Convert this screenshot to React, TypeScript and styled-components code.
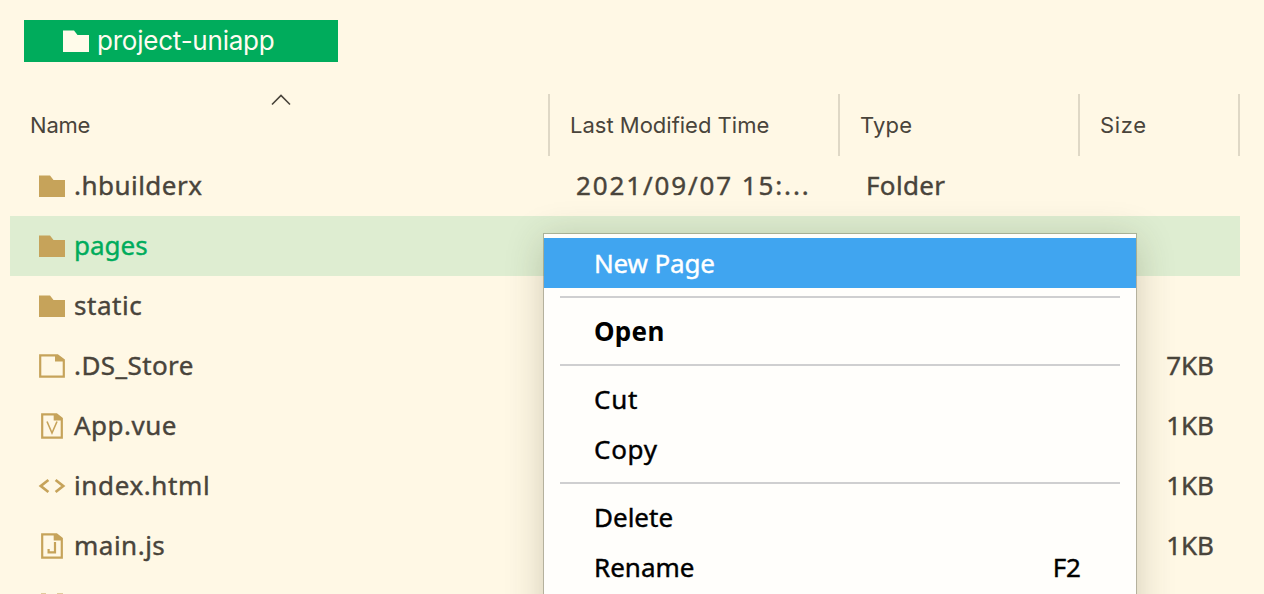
import React from "react";
import styled, { createGlobalStyle } from "styled-components";

const GlobalStyle = createGlobalStyle`
  * { box-sizing: border-box; }
  html, body { margin: 0; height: 100%; overflow: hidden; }
`;

const Explorer = styled.main`
  position: relative;
  display: flow-root;
  height: 594px;
  overflow: hidden;
  background: #fff8e5;
  color: #49443b;
  font-family: "Noto Sans", "Open Sans", sans-serif;
  font-size: 26px;
`;

const ProjectTab = styled.div`
  display: flex;
  align-items: center;
  gap: 7px;
  width: 314px;
  height: 42px;
  margin: 20px 0 32px 24px;
  padding-left: 38px;
  background: #00ac5c;
  color: #fffbf0;
  font-family: Inter, sans-serif;
  line-height: 42px;
  svg { display: block; }
`;

const Label = styled.span<{ $track?: number; $heavy?: boolean }>`
  letter-spacing: ${(p) => p.$track ?? 0}px;
  -webkit-text-stroke: ${(p) => (p.$heavy ? "0.4px currentColor" : "0")};
  white-space: pre;
`;

const Grid = styled.div`
  display: grid;
  grid-template-columns: 540px 290px 240px 160px;
  width: 1230px;
  margin-left: 10px;
`;

const HeaderCell = styled.div`
  display: flex;
  flex-direction: column;
  height: 62px;
  padding-left: 20px;
  border-right: 2px solid #dfd8c6;
  font-family: Inter, sans-serif;
  font-size: 22px;
  line-height: 30px;
`;

const SortSlot = styled.div`
  display: flex;
  justify-content: center;
  height: 16px;
  padding-right: 16px;
`;

const Row = styled.div<{ $selected?: boolean }>`
  display: grid;
  grid-template-columns: subgrid;
  grid-column: 1 / -1;
  height: 60px;
  line-height: 58px;
  background: ${(p) => (p.$selected ? "#deedd1" : "transparent")};
  color: ${(p) => (p.$selected ? "#00ac5c" : "inherit")};
`;

const NameCell = styled.div`
  display: flex;
  gap: 8px;
  padding-left: 28px;
  svg { display: block; flex: none; margin-top: 16px; }
`;

const TextCell = styled.div`
  padding-left: 26px;
  white-space: nowrap;
`;

const SizeCell = styled.div`
  padding-right: 26px;
  text-align: right;
`;

const Menu = styled.div`
  position: absolute;
  left: 544px;
  top: 234px;
  width: 592px;
  height: 480px;
  padding-top: 4px;
  background: #fffefb;
  color: #000;
  box-shadow: 0 0 0 1px rgba(90, 90, 70, 0.35), 0 6px 36px rgba(60, 60, 20, 0.24);
`;

const MenuItem = styled.div<{ $active?: boolean; $bold?: boolean }>`
  display: flex;
  justify-content: space-between;
  height: 50px;
  padding: 0 55px 0 50px;
  line-height: 51px;
  font-weight: ${(p) => (p.$bold ? 700 : 400)};
  background: ${(p) => (p.$active ? "#40a5f0" : "transparent")};
  color: ${(p) => (p.$active ? "#fff" : "inherit")};
`;

const Separator = styled.div`
  height: 2px;
  margin: 8px 16px;
  background: #cfcfd0;
`;

type IconKind = "folder" | "file" | "vue" | "html" | "js" | "json";

const gold = "#c6a35a";

function FolderShape({ color = gold }: { color?: string }) {
  return (
    <svg width="28" height="28" viewBox="0 0 28 28">
      <path d="M1 3.5H12L15.5 8H27V25H1Z" fill={color} />
    </svg>
  );
}

function FileIcon({ kind }: { kind: IconKind }) {
  if (kind === "folder") return <FolderShape />;
  return (
    <svg width="28" height="28" viewBox="0 0 28 28" fill="none" stroke={gold} strokeWidth="2.2">
      {kind === "file" && (
        <>
          <path d="M2.2 3.4H19.5L25.8 8V24.6H2.2Z" />
          <path d="M17 3H20L26 8V9.5H17Z" fill={gold} stroke="none" />
        </>
      )}
      {(kind === "vue" || kind === "js") && (
        <>
          <path d="M4.2 2.4H18.5L23.8 6.6V25.7H4.2Z" />
          <path d="M15.7 2H19L24 6.5V8.6H15.7Z" fill={gold} stroke="none" />
        </>
      )}
      {kind === "vue" && <path d="M9 9.5L14 21L19 9.5" strokeWidth="1.6" />}
      {kind === "js" && <path d="M17 10V20.3H10.6V17" />}
      {kind === "html" && <path d="M10.4 8L2.8 14L10.4 20M17.6 8L25.2 14L17.6 20" strokeWidth="2.7" />}
      {kind === "json" && <path d="M8 2.4H3M19 2.4H25" strokeOpacity="0.7" />}
    </svg>
  );
}

interface Entry {
  name: string;
  kind: IconKind;
  track?: number;
  time?: string;
  type?: string;
  size?: string;
  selected?: boolean;
}

const entries: Entry[] = [
  { name: ".hbuilderx", kind: "folder", track: 0.47, time: "2021/09/07 15:...", type: "Folder" },
  { name: "pages", kind: "folder", selected: true },
  { name: "static", kind: "folder", track: 0.55 },
  { name: ".DS_Store", kind: "file", track: 0.42, size: "7KB" },
  { name: "App.vue", kind: "vue", track: 0.5, size: "1KB" },
  { name: "index.html", kind: "html", track: 0.62, size: "1KB" },
  { name: "main.js", kind: "js", track: 0.5, size: "1KB" },
  { name: "", kind: "json" },
];

export default function App() {
  return (
    <>
      <GlobalStyle />
      <Explorer>
        <ProjectTab>
          <FolderShape color="#fffbea" />
          <Label $track={-0.22}>project-uniapp</Label>
        </ProjectTab>
        <Grid>
          <HeaderCell>
            <SortSlot>
              <svg width="20" height="14" viewBox="0 0 20 14" fill="none" stroke="#49443b" strokeWidth="1.6">
                <path d="M1 10.5L10 1.5L19 10.5" />
              </svg>
            </SortSlot>
            <Label $track={-0.2}>Name</Label>
          </HeaderCell>
          <HeaderCell><SortSlot /><Label>Last Modified Time</Label></HeaderCell>
          <HeaderCell><SortSlot /><Label $track={0.2}>Type</Label></HeaderCell>
          <HeaderCell><SortSlot /><Label $track={0.7}>Size</Label></HeaderCell>
          {entries.map((e, i) => (
            <Row key={i} $selected={e.selected}>
              <NameCell>
                <FileIcon kind={e.kind} />
                <Label $heavy $track={e.track}>{e.name}</Label>
              </NameCell>
              <TextCell>{e.time && <Label $heavy $track={1.88}>{e.time}</Label>}</TextCell>
              <TextCell>{e.type && <Label $heavy $track={0.35}>{e.type}</Label>}</TextCell>
              <SizeCell>{e.size && <Label $heavy>{e.size}</Label>}</SizeCell>
            </Row>
          ))}
        </Grid>
        <Menu>
          <MenuItem $active><Label $heavy $track={-0.15}>New Page</Label></MenuItem>
          <Separator />
          <MenuItem $bold><Label $track={0.3}>Open</Label></MenuItem>
          <Separator />
          <MenuItem><Label $heavy $track={0.7}>Cut</Label></MenuItem>
          <MenuItem><Label $heavy $track={0.7}>Copy</Label></MenuItem>
          <Separator />
          <MenuItem><Label $heavy>Delete</Label></MenuItem>
          <MenuItem><Label $heavy>Rename</Label><Label $heavy>F2</Label></MenuItem>
        </Menu>
      </Explorer>
    </>
  );
}
